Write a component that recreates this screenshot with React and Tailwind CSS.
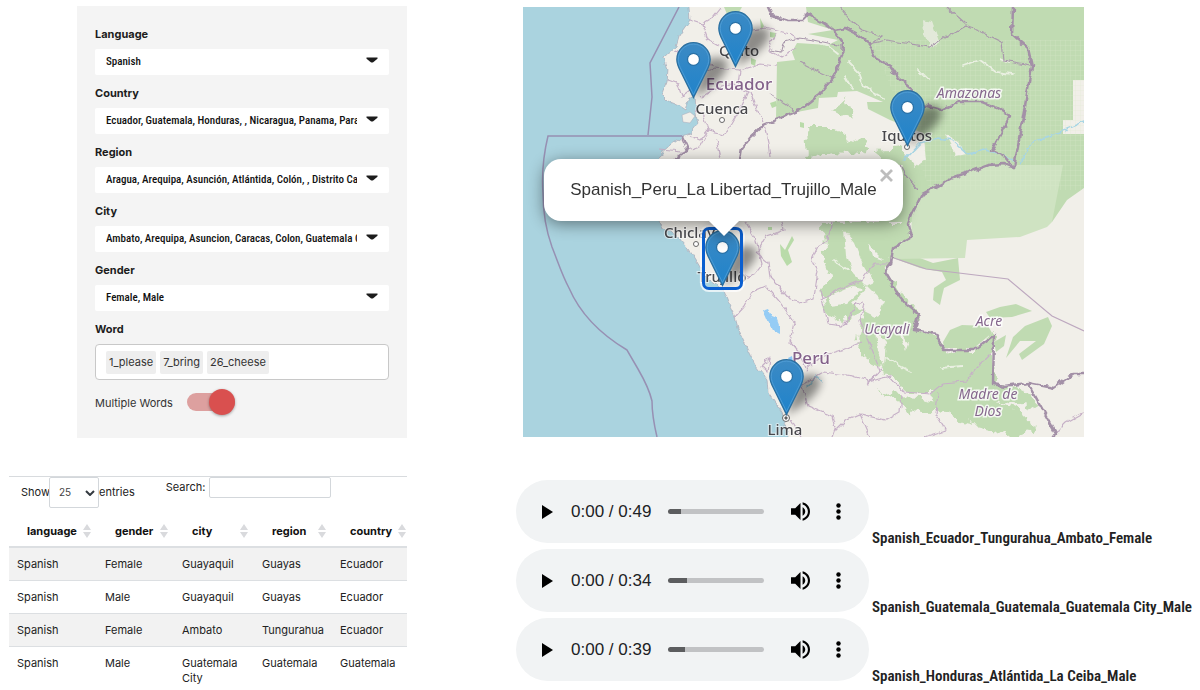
import { useState } from "react";

const FILTERS = [
  { id: "language", label: "Language", value: "Spanish" },
  { id: "country", label: "Country", value: "Ecuador, Guatemala, Honduras, , Nicaragua, Panama, Paraguay, Peru" },
  { id: "region", label: "Region", value: "Aragua, Arequipa, Asunción, Atlántida, Colón, , Distrito Capital, Guatemala" },
  { id: "city", label: "City", value: "Ambato, Arequipa, Asuncion, Caracas, Colon, Guatemala City, Guayaquil" },
  { id: "gender", label: "Gender", value: "Female, Male" },
];

const WORDS = ["1_please", "7_bring", "26_cheese"];

const COLUMNS = ["language", "gender", "city", "region", "country"];

const ROWS = [
  ["Spanish", "Female", "Guayaquil", "Guayas", "Ecuador"],
  ["Spanish", "Male", "Guayaquil", "Guayas", "Ecuador"],
  ["Spanish", "Female", "Ambato", "Tungurahua", "Ecuador"],
  ["Spanish", "Male", "Guatemala City", "Guatemala", "Guatemala"],
];

const CLIPS = [
  { time: "0:49", loaded: 14, name: "Spanish_Ecuador_Tungurahua_Ambato_Female" },
  { time: "0:34", loaded: 20, name: "Spanish_Guatemala_Guatemala_Guatemala City_Male" },
  { time: "0:39", loaded: 18, name: "Spanish_Honduras_Atlántida_La Ceiba_Male" },
];

const NARROW = "font-['Liberation_Sans_Narrow','Roboto_Condensed','Liberation_Sans',sans-serif]";

function FilterSelect({ id, label, value }) {
  return (
    <div className="flex flex-col gap-[7px]">
      <label htmlFor={id} className="text-[11px] leading-[15px] font-bold text-[#1c1c1c]">
        {label}
      </label>
      <div className="grid items-center">
        <select
          id={id}
          className={`col-start-1 row-start-1 h-[26px] w-full appearance-none rounded-xs bg-white pr-8 pl-[11px] text-[11px] font-medium text-[#111] ${NARROW}`}
        >
          <option>{value}</option>
        </select>
        <svg viewBox="0 0 12 6" className="pointer-events-none col-start-1 row-start-1 mr-[11px] mb-1 h-[6px] w-3 justify-self-end">
          <path d="M.5.5h11v1.2L7.200 5.200q-1.200 .8-2.400 0L.5 1.700z" fill="#1c1c1c" />
        </svg>
      </div>
    </div>
  );
}

function FilterPanel() {
  const [multiple, setMultiple] = useState(true);
  return (
    <section className="mt-[6px] ml-[77px] flex flex-col gap-[11px] bg-[#f4f4f4] px-[18px] pt-[21px] pb-[22px]">
      {FILTERS.map((f) => (
        <FilterSelect key={f.id} {...f} />
      ))}
      <div className="flex flex-col gap-[7px]">
        <label htmlFor="word" className="text-[11px] leading-[15px] font-bold text-[#1c1c1c]">
          Word
        </label>
        <div className="flex h-9 items-center gap-1 rounded border border-[#c8c8c8] bg-white px-[10px]">
          {WORDS.map((w) => (
            <span key={w} className="rounded-xs bg-[#eeeeee] px-[3px] text-[11px] leading-[23px] text-[#333]">
              {w}
            </span>
          ))}
          <input id="word" className="min-w-0 flex-1 text-[11px] outline-none" />
        </div>
      </div>
      <div className="flex items-center gap-[14px]">
        <label htmlFor="multiple" className="text-[11px] text-[#333]">
          Multiple Words
        </label>
        <input
          id="multiple"
          type="checkbox"
          checked={multiple}
          onChange={(e) => setMultiple(e.target.checked)}
          className="mt-[2px] mb-[5px] flex h-[18px] w-12 appearance-none items-center rounded-full bg-[#dda09f] before:size-[26px] before:shrink-0 before:rounded-full before:bg-[#d9504f] before:shadow-[0_1px_3px_rgba(0,0,0,0.35)] checked:before:ml-auto"
        />
      </div>
    </section>
  );
}

function SortIcon() {
  return (
    <svg viewBox="0 0 8 14" className="h-[14px] w-2 shrink-0" fill="#d9dadd">
      <path d="M4 0l4 6H0zM4 14l4-6H0z" />
    </svg>
  );
}

function DataTable() {
  return (
    <section className="mt-[38px] ml-[9px] overflow-hidden border-t border-[#d8dbde] text-[11px] leading-[15px] text-[#222]">
      <div className="flex items-start">
        <div className="flex items-center pl-3">
          <label htmlFor="entries" className="w-7">
            Show
          </label>
          <div className="grid items-center">
            <select
              id="entries"
              className="col-start-1 row-start-1 h-[31px] w-[50px] appearance-none rounded-xs border border-[#d3d7db] bg-white pl-[9px] text-[10px] text-[#444]"
            >
              <option>25</option>
            </select>
            <svg viewBox="0 0 10 6" className="pointer-events-none col-start-1 row-start-1 mr-1 h-[6px] w-[10px] justify-self-end">
              <path d="M1 1l4 4 4-4" fill="none" stroke="#343a40" strokeWidth="2" />
            </svg>
          </div>
          <span>entries</span>
        </div>
        <div className="ml-[31px] flex items-center gap-1">
          <label htmlFor="search">Search:</label>
          <input id="search" className="h-[21px] w-[122px] rounded-xs border border-[#d3d7db] px-2" />
        </div>
      </div>
      <table className="w-[403px] table-fixed border-collapse">
        <colgroup>
          <col className="w-[88px]" />
          <col className="w-[77px]" />
          <col className="w-[80px]" />
          <col className="w-[78px]" />
          <col className="w-[80px]" />
        </colgroup>
        <thead>
          <tr className="h-[39px] border-b-2 border-[#dcdfe2]">
            {COLUMNS.map((c) => (
              <th key={c} scope="col" className="pt-2 pr-[6px] pb-0 pl-[18px] text-left align-middle font-bold text-[#111]">
                <div className="flex items-center justify-between">
                  {c}
                  <SortIcon />
                </div>
              </th>
            ))}
          </tr>
        </thead>
        <tbody>
          {ROWS.map((row, i) => (
            <tr key={i} className="border-b border-[#dcdfe2] odd:bg-[#f2f2f2] last:border-b-0">
              {row.map((cell, j) => (
                <td key={j} className="px-2 pt-[9px] pb-2 align-top">
                  {cell}
                </td>
              ))}
            </tr>
          ))}
        </tbody>
      </table>
    </section>
  );
}

function Pin({ className, label }) {
  return (
    <button type="button" aria-label={label} className={`absolute h-[57px] w-[35px] ${className}`}>
      <svg viewBox="0 0 25 41" className="h-full w-full overflow-visible">
        <path d="M13 40L20 14Q33 8 37 15Q38 26 13 40z" fill="#000" opacity="0.42" filter="url(#pinShadow)" />
        <path
          d="M12.500 .5C5.900 .5.5 5.900.5 12.500c0 2.600.9 5 2.500 8.200L12.500 40l9.500-19.300c1.600-3.200 2.500-5.600 2.500-8.200C24.500 5.900 19.100.5 12.500.5z"
          fill="url(#pinFill)"
          stroke="#2b6f9f"
          strokeWidth="0.9"
        />
        <path
          d="M12.500 1.500C6.500 1.500 1.500 6.500 1.500 12.500c0 2.400.8 4.700 2.400 7.800L12.500 37.700l8.600-17.400c1.600-3.100 2.400-5.400 2.400-7.800 0-6-5-11-11-11z"
          fill="none"
          stroke="#5aa6dc"
          strokeWidth="0.7"
          opacity="0.7"
        />
        <circle cx="12.500" cy="12.500" r="4.300" fill="#fff" stroke="#2a71a6" strokeWidth="0.9" />
      </svg>
    </button>
  );
}

function BaseMap() {
  return (
    <svg
      viewBox="523 7 561 430"
      preserveAspectRatio="xMidYMid slice"
      className="h-full w-full font-['Noto_Sans','Open_Sans',sans-serif]"
      role="img"
      aria-label="Map of Ecuador and Peru"
    >
      <defs>
        <linearGradient id="pinFill" x1="0" y1="0" x2="0" y2="1">
          <stop offset="0" stopColor="#3c8ac4" />
          <stop offset="1" stopColor="#1f83cb" />
        </linearGradient>
        <filter id="pinShadow" x="-60%" y="-60%" width="220%" height="220%">
          <feGaussianBlur stdDeviation="3.200" />
        </filter>
        <filter id="rough" filterUnits="userSpaceOnUse" x="500" y="-10" width="610" height="470">
          <feTurbulence type="fractalNoise" baseFrequency="0.13" numOctaves="2" seed="4" />
          <feDisplacementMap in="SourceGraphic" scale="6" xChannelSelector="R" yChannelSelector="G" />
        </filter>
        <filter id="ragged" filterUnits="userSpaceOnUse" x="500" y="-10" width="610" height="470">
          <feTurbulence type="fractalNoise" baseFrequency="0.09" numOctaves="3" seed="9" />
          <feDisplacementMap in="SourceGraphic" scale="16" xChannelSelector="R" yChannelSelector="G" />
        </filter>
        <pattern id="grid" width="5" height="5" patternUnits="userSpaceOnUse">
          <path d="M0 0H5M0 0V5" stroke="#dbe9cd" strokeWidth="0.7" />
        </pattern>
      </defs>

      <rect x="523" y="7" width="561" height="430" fill="#f1efe9" />

      {/* forest and protected areas */}
      <g fill="#c0dbb2">
        <path d="M806 7L808 22 833 30 808 34 838 40 828 45 797 43 792 52 795 60 777 62 776 119 797 112 818 108 819 98 837 97 838 92 857 91 883 102 867 102 868 109 890 120 910 128 923 133 926 160H905L880 222H1052L1067 200 1084 188V134H1063V120H1073V80H1084V7z" />
        <path d="M724 7H742L738 14H727z" />
        <g filter="url(#ragged)">
          <path d="M806 128L832 128 852 138 872 147 862 154 836 152 808 158z" />
          <path d="M832 110L846 100 854 120 840 114z" />
          <path d="M876 150L905 148 915 165H885z" />
          <path d="M823 222H910L908 240 893 248 886 270 898 292 915 312 920 330 936 336 943 349 973 350 992 335 994 380 1022 392 1040 402 1030 408 994 400 1030 417 1034 433 1010 437 988 428 962 422 944 412 930 402 938 392 906 392 890 376 868 360 857 345 863 312 842 322 826 310 820 290 832 280 824 255z" />
          <path d="M876 388L892 394 915 396 935 402 932 414 912 412 896 402z" />
        </g>
        <path d="M893 258H920L933 263 958 258 960 280 944 288 942 296 940 305 933 300 934 288 946 280 942 272 920 268z" />
        <path d="M943 342L950 330 962 325 988 326 992 333 974 348 944 348z" />
        <path d="M986 312L1000 307 1016 304 1032 311 1012 317 990 318z" />
        <path d="M1013 337L1025 326 1048 317 1052 326 1044 344 1022 360 1019 354 1036 341 1020 341 1006 358z" />
        <path d="M994 342L1006 335 1004 346 996 352z" />
      </g>
      <path d="M922 194L952 178 988 165 1063 165 1052 222 1047 227 1020 237 967 240 965 258 893 259 893 248 911 238 912 214z" fill="#cfe3c2" />
      <path d="M872 40H1084V190H930L900 110z" fill="url(#grid)" opacity="0.6" />
      <g fill="#f1efe9" filter="url(#rough)">
        <path d="M923 20L932 22 940 44 930 48 924 34z" opacity="0.7" />
        <path d="M844 230L854 242 862 262 874 282 866 286 852 272 846 256z" />
        <path d="M876 330L886 342 884 366 878 350z" />
        <path d="M852 304L868 286 884 302 878 318 866 312z" />
        <path d="M898 330L908 344 906 350z" />
        <path d="M828 296L852 286 864 288 846 304 830 306z" />
        <path d="M868 242L876 252 884 260 872 256z" />
        <path d="M908 152L924 140 926 158 914 168z" />
        <path d="M945 134L958 142 966 154 956 156z" />
      </g>
      <path
        d="M816 42L828 46 838 54M848 62L860 74 862 84 872 92 884 99M845 76L852 88M834 260L848 270M912 372L900 366 886 356M940 368L962 366M918 70L928 80M962 66L980 60 996 72 1012 74M1000 58L1008 62"
        fill="none"
        stroke="#eaf0e2"
        strokeWidth="1.800"
        strokeLinecap="round"
        filter="url(#rough)"
      />
      <g fill="#b9dba9">
        <path d="M760 18L764 26 761 30zM770 32L776 33 775 38 770 37zM751 58L756 60 755 66 751 64z" />
        <path d="M780 244L785 250 792 236 794 240 788 250 792 262 787 266 781 256z" />
        <path d="M768 227h4v3h-4zM770 103l6-2 1 5-5 2zM800 122l4 1v5l-4-1z" />
      </g>

      {/* ocean */}
      <path
        d="M505 -5H688L690 20 680 34 676 47 664 58 668 70 667 82 662 95 668 101 680 106 686 110 690 97 695 97 696 112 698 124 690 134 682 137 670 146 658 157 650 185 652 212 662 227 675 234 688 248 697 262 706 277 723 290 729 305 735 317 738 328 748 350 756 366 767 380 768 393 782 413 786 426 792 445H505z"
        fill="#aad3df"
        stroke="#a9a9b8"
        strokeWidth="0.7"
        filter="url(#rough)"
      />
      <path d="M682 115L690 112 695 116 690 123 683 122z" fill="#f1efe9" stroke="#a9a9b8" strokeWidth="0.5" />
      <g fill="none" stroke="#a7d5e4" strokeLinecap="round" filter="url(#rough)">
        <path d="M904 160L920 143 938 138 952 140 968 154 985 150 1000 154 1014 160" strokeWidth="1.500" />
        <path d="M1020 165L1032 142 1060 132 1084 122" strokeWidth="1.500" />
        <path d="M808 386L815 376 822 382" strokeWidth="1.500" />
      </g>
      <path d="M762 311l6-2 3 6 5 2 3 8 0 10-4-2-4-10-5-3z" fill="#95ccf5" filter="url(#rough)" />
      <path d="M788 358l4-2 1 4-3 2z" fill="#8cc6f4" />

      {/* provincial boundaries */}
      <g fill="none" stroke="#c6b0c7" strokeWidth="1.200" filter="url(#rough)">
        <path d="M690 20L702 24 708 40 722 48 740 32 765 28 790 34 800 40" />
        <path d="M702 24L712 18 720 8M675 52L688 56 702 62 714 66M667 80L678 84 682 96 690 90 700 74 714 68 740 70 760 64 777 66" />
        <path d="M776 34L768 50 782 58 796 46M700 98L716 88 730 84 748 92 740 110 732 124 724 134 708 130 700 140 690 136" />
        <path d="M750 92L756 108 764 122M708 130L702 114 694 108M740 70L738 84M660 150L682 152 700 146 708 132M716 140L720 158M764 124L768 142 770 158" />
        <path d="M745 222L756 240 762 264 754 274 748 276 738 272" />
        <path d="M735 317L745 306 752 292 766 286 780 302 794 322 790 342 800 354 806 368" />
        <path d="M756 252L768 262 770 278 780 288 790 300 800 302 814 298 818 270 812 260 818 246 828 240 832 222" />
        <path d="M762 366L770 358 768 372zM757 252L766 236 784 230 782 222M820 290L828 324 842 326 850 318 856 304 864 302M820 300L838 290 862 280 874 264 888 264" />
        <path d="M864 304L860 320 870 346 880 370 868 382 890 376 904 392 930 394 942 384 966 382 976 368 990 354" />
        <path d="M800 386L824 372 852 376 866 380 868 384 882 368M802 386L808 406 832 416 836 430 846 420 860 414 886 420 900 412 902 396M860 414L870 437M832 437L836 426M924 437L946 430 936 414 938 392" />
        <path d="M1056 432L1066 422 1084 412M790 420L800 437M806 370L822 356 842 350 862 342" />
        <g stroke="#a998ac">
          <path d="M870 44L886 40 930 47 945 38 966 26 982 32 1002 42 1004 60 1030 65M947 7L966 24" />
          <path d="M800 62L816 70 834 78M770 50L782 52 784 42 800 38 814 40 842 46M770 94L786 104 796 112" />
          <path d="M918 190L906 176 900 165M840 7L850 20 862 30 882 36 872 44" />
        </g>
      </g>
      <path d="M894 258L926 269 1008 279 1052 316 1084 331" fill="none" stroke="#bda8bf" strokeWidth="1.200" />

      {/* national boundaries */}
      <g fill="none" stroke="#a390a7" strokeWidth="2.500" strokeLinejoin="round" strokeLinecap="round" filter="url(#rough)">
        <path d="M768 7L772 16 790 20 802 20 808 14 822 22 834 30 846 28 858 34 870 44 876 58 890 66 898 78 910 88 914 104 926 106 942 110 958 102 982 102 998 108 1010 116 992 150 1004 156 1014 168" />
        <path d="M834 31L843 44 842 56 834 76 820 94 800 110 764 125 750 138 742 148 740 160" />
        <path d="M1013 7L1012 34 1028 48 1032 66 1014 168 1004 164 988 165 952 178 922 194 912 214 908 224 911 238 893 248 891 264 885 272 898 294 906 304 918 314 914 330 936 334 944 350 974 350 994 335 993 384 1004 386 1028 383 1054 388 1074 374 1086 374M1028 383L1056 434 1052 440" />
        <path d="M682 137L688 150 676 158" />
      </g>
      <g fill="none" stroke="#9790b3" strokeWidth="1.500">
        <path d="M679 7L650 63 652 97 648 135M682 136H548Q541 165 543 193 543 222 552 247C558 262 562 275 569 288Q585 325 627 350L638 369Q649 388 652 401 652 416 657 437" />
      </g>

      {/* place names */}
      <g fill="none" stroke="#666" strokeWidth="1">
        <circle cx="722" cy="120" r="2.500" fill="#fff" />
        <circle cx="696" cy="244" r="2.500" fill="#fff" />
        <circle cx="907" cy="147" r="2.500" fill="#fff" />
        <circle cx="786" cy="418" r="3.500" fill="#fff" />
        <circle cx="786" cy="418" r="1.200" fill="#555" />
      </g>
      <g fill="#48484c" stroke="#fff" strokeOpacity="0.6" strokeWidth="2" paintOrder="stroke" fontSize="15" fontWeight="500" textAnchor="middle">
        <text x="739" y="56">Quito</text>
        <text x="722" y="114">Cuenca</text>
        <text x="907" y="141">Iquitos</text>
        <text x="694" y="238">Chiclayo</text>
        <text x="722" y="282">Trujillo</text>
        <text x="785" y="435">Lima</text>
      </g>
      <g fill="#83618a" stroke="#fff" strokeOpacity="0.6" strokeWidth="2" paintOrder="stroke" fontSize="17" fontWeight="500" textAnchor="middle">
        <text x="739" y="90">Ecuador</text>
        <text x="811" y="364">Perú</text>
      </g>
      <g
        fill="#86688e"
        stroke="#fff"
        strokeOpacity="0.8"
        strokeWidth="3"
        paintOrder="stroke"
        fontSize="14"
        fontStyle="italic"
        textAnchor="middle"
      >
        <text x="969" y="98">Amazonas</text>
        <text x="887" y="334">Ucayali</text>
        <text x="989" y="326">Acre</text>
        <text x="988" y="399">Madre de</text>
        <text x="988" y="416">Dios</text>
      </g>
    </svg>
  );
}

function MapView() {
  return (
    <section className="relative mt-[7px] mr-[116px] ml-[116px] h-[430px] overflow-hidden">
      <BaseMap />
      <Pin label="Ambato" className="top-[4px] left-[195px]" />
      <Pin label="Guayaquil" className="top-[35px] left-[153px]" />
      <Pin label="Iquitos" className="top-[83px] left-[367px]" />
      <Pin label="Trujillo" className="top-[223px] left-[182px] rounded outline-3 outline-[#0a5fd0] ring-5 ring-white/70" />
      <Pin label="Lima" className="top-[352px] left-[246px]" />
      <div className="absolute top-[152px] left-[21px] flex h-[62px] w-[359px] flex-col items-center drop-shadow-[0_3px_8px_rgba(0,0,0,0.45)]">
        <div className="flex h-[62px] w-full shrink-0 items-center justify-center rounded-[17px] bg-white font-['Liberation_Sans',sans-serif] text-[17px] whitespace-nowrap text-[#333]">
          Spanish_Peru_La Libertad_Trujillo_Male
        </div>
        <svg viewBox="0 0 30 15" className="h-[15px] w-[30px] shrink-0">
          <path d="M0 0H30L15 15z" fill="#fff" />
        </svg>
        <button type="button" aria-label="Close popup" className="absolute top-[10px] right-[10px] size-[13px]">
          <svg viewBox="0 0 13 13" className="size-full">
            <path d="M1 1l11 11M12 1L1 12" stroke="#bdbdbd" strokeWidth="2.800" />
          </svg>
        </button>
      </div>
    </section>
  );
}

function AudioPlayer({ time, loaded, name }) {
  return (
    <div className="flex items-end gap-[3px]">
      <div className="flex h-[63px] w-[353px] shrink-0 items-center rounded-full bg-[#f1f3f4] pl-[26px]">
        <button type="button" aria-label="Play" className="w-[29px]">
          <svg viewBox="0 0 11 14" className="h-[14px] w-[11px]">
            <path d="M0 0v14l11-7z" />
          </svg>
        </button>
        <span className="w-[97px] font-['Liberation_Sans',sans-serif] text-[17px] text-[#202124]">0:00 / {time}</span>
        <input
          type="range"
          aria-label={`Position in ${name}`}
          defaultValue="0"
          className="h-[5px] w-24 appearance-none rounded-full [&::-webkit-slider-thumb]:appearance-none"
          style={{ background: `linear-gradient(to right, #5c5d5f ${loaded}%, #c1c2c4 ${loaded}%)` }}
        />
        <button type="button" aria-label="Mute" className="ml-[27px]">
          <svg viewBox="3 3 18 18" className="size-[19px]">
            <path d="M3 9v6h4l5 5V4L7 9H3zm13.500 3c0-1.770-1.020-3.290-2.500-4.030v8.050c1.480-.73 2.500-2.250 2.500-4.020zM14 3.230v2.060c2.890.86 5 3.540 5 6.710s-2.110 5.850-5 6.710v2.060c4.010-.91 7-4.490 7-8.770s-2.990-7.860-7-8.770z" />
          </svg>
        </button>
        <button type="button" aria-label="More options" className="ml-[26px]">
          <svg viewBox="0 0 5 17" className="h-[17px] w-[5px]">
            <circle cx="2.500" cy="2.500" r="2.200" />
            <circle cx="2.500" cy="8.500" r="2.200" />
            <circle cx="2.500" cy="14.500" r="2.200" />
          </svg>
        </button>
      </div>
      <span className={`text-[15px] leading-[10px] font-semibold whitespace-nowrap text-[#222] ${NARROW}`}>{name}</span>
    </div>
  );
}

export default function App() {
  return (
    <main className="grid grid-cols-[407fr_793fr] items-start overflow-hidden bg-white font-['Inter',sans-serif]">
      <div className="min-w-0">
        <FilterPanel />
        <DataTable />
      </div>
      <div className="min-w-0">
        <MapView />
        <div className="mt-[43px] ml-[109px] flex flex-col gap-[6px]">
          {CLIPS.map((c) => (
            <AudioPlayer key={c.name} {...c} />
          ))}
        </div>
      </div>
    </main>
  );
}
